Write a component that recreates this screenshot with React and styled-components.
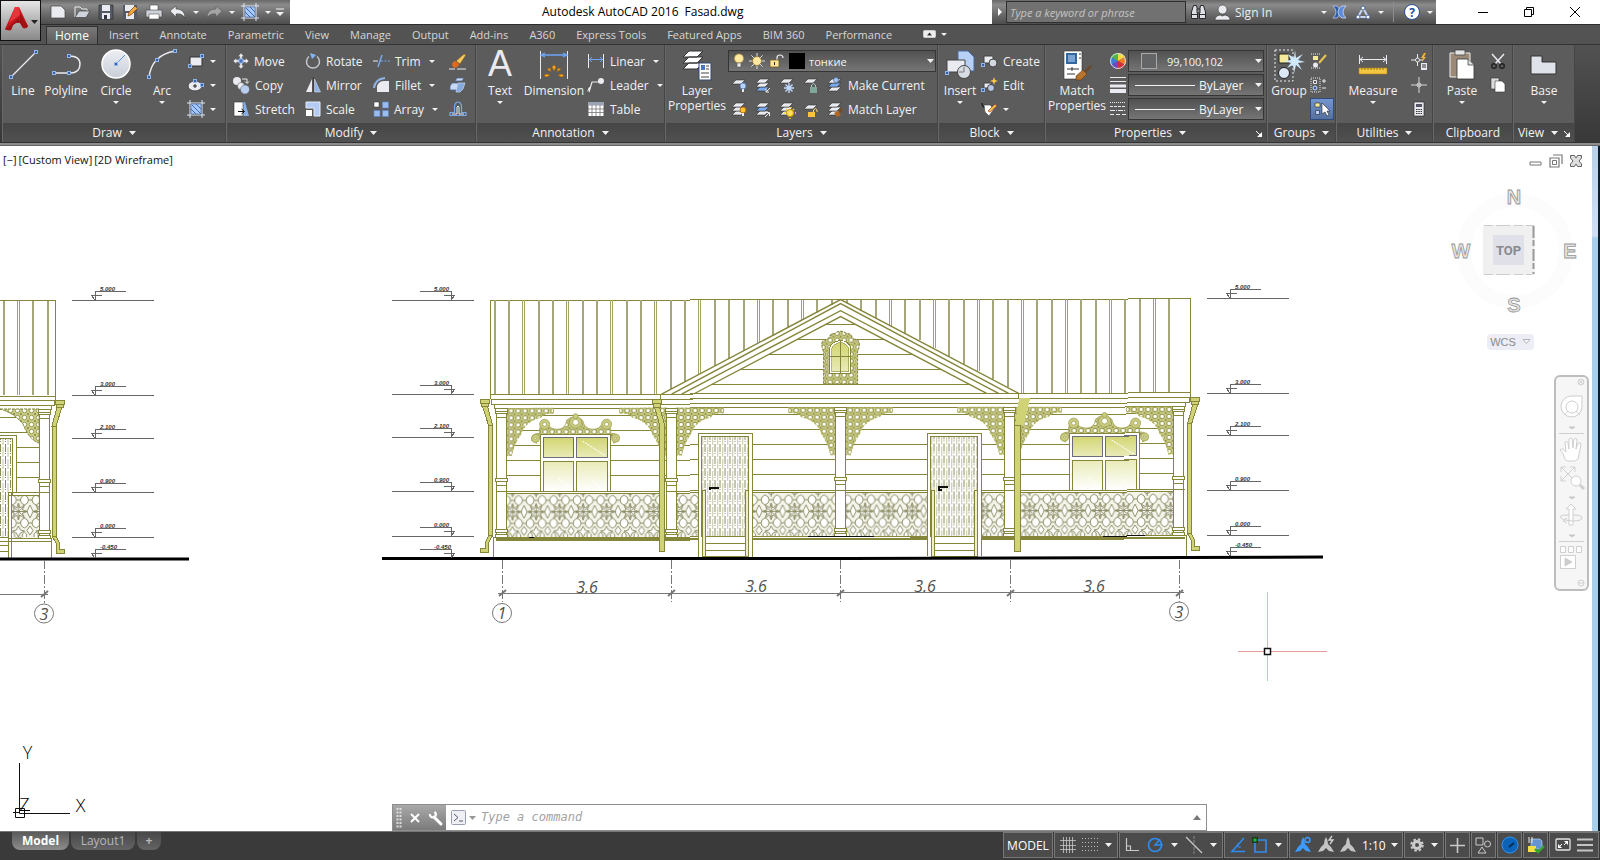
import React from "react";
import styled, { createGlobalStyle, css } from "styled-components";

const ui = `"Open Sans", "Noto Sans", sans-serif`;

const Global = createGlobalStyle`
  * { box-sizing: border-box; }
  body { margin: 0; font-family: ${ui}; font-size: 12px; background: #fff; }
  button, input, select { font: inherit; color: inherit; }
  button { background: none; border: 0; padding: 0; cursor: default; }
  svg { display: block; flex: none; }
`;

/* ---------- shell ---------- */

const Shell = styled.div`
  min-height: 100vh;
  display: flex;
  flex-direction: column;
  overflow: hidden;
`;

const metal = css`
  background: linear-gradient(#686868, #8b8b8b 20%, #6a6a6a 60%, #4d4d4d);
`;

const Header = styled.header`
  position: relative;
  background: #535353;
`;

const TitleBar = styled.div`
  display: flex;
  align-items: stretch;
  justify-content: space-between;
  height: 24px;
  background: #fff;
`;

const AppButton = styled.button`
  position: absolute;
  left: 0;
  top: 0;
  width: 41px;
  height: 41px;
  z-index: 2;
  border: 1px solid #111;
  background: linear-gradient(#e6e6e6, #b4b4b4 50%, #8a8a8a);
`;

const QuickAccess = styled.div`
  ${metal}
  display: flex;
  align-items: center;
  padding-left: 46px;
  width: 290px;
`;

const QuickButton = styled.button`
  display: flex;
  align-items: center;
  justify-content: center;
  width: ${(p) => (p.$narrow ? 12 : 24)}px;
  height: 24px;
`;

const Caption = styled.h1`
  flex: 1;
  display: flex;
  gap: 6px;
  margin: 0;
  padding-left: 252px;
  font-size: 12px;
  font-weight: 400;
  line-height: 24px;
  color: #000;
`;

const InfoCenter = styled.div`
  ${metal}
  display: flex;
  align-items: center;
  width: 444px;
  padding-left: 2px;
  color: #eee;
  font-size: 12px;
`;

const Search = styled.input`
  width: 180px;
  height: 22px;
  padding: 0 3px;
  border: 1px solid #2f2f2f;
  background: #717171;
  font-size: 11px;
  font-style: italic;
  &::placeholder { color: #c4c4c4; opacity: 1; }
`;

const SignIn = styled.button`
  display: flex;
  align-items: center;
  gap: 4px;
  flex: 1;
  padding-left: 4px;
  font-size: 12px;
  span { flex: 1; text-align: left; }
`;

const WindowButtons = styled.div`
  display: flex;
  width: 164px;
  justify-content: flex-end;
  padding-right: 2px;
  button { width: 46px; display: flex; align-items: center; justify-content: center; }
`;

const Divider = styled.span`
  width: 1px;
  height: 20px;
  margin: 0 6px;
  background: #8d8d8d;
`;

/* ---------- ribbon ---------- */

const TabStrip = styled.nav`
  display: flex;
  align-items: flex-end;
  gap: 1px;
  height: 21px;
  padding-left: 46px;
  border-top: 1px solid #2d2d2d;
  border-bottom: 1px solid #333;
`;

const Tab = styled.button`
  height: ${(p) => (p.$active ? 18 : 19)}px;
  padding: 0 10px;
  font-size: ${(p) => (p.$active ? 12 : 11)}px;
  line-height: 16px;
  white-space: nowrap;
  color: ${(p) => (p.$active ? "#fff" : "#d6d6d6")};
  ${(p) =>
    p.$active &&
    css`
      padding: 0 8px;
      background: linear-gradient(#787878, #5c5c5c);
      border: 1px solid #2f2f2f;
      border-bottom: 0;
    `}
`;

const TabToggle = styled.button`
  display: flex;
  align-items: center;
  gap: 5px;
  height: 20px;
  margin-left: 20px;
`;

const Ribbon = styled.div`
  display: flex;
  height: 98px;
  padding-left: 2px;
  border-bottom: 1px solid #333;
  background: linear-gradient(#525252, #383838);
`;

const RibbonEdge = styled.div`
  height: 3px;
  background: #8c8c8c;
  border-bottom: 1px solid #666;
`;

const PanelBox = styled.section`
  display: flex;
  flex-direction: column;
  width: ${(p) => p.$w}px;
  background: #5c5c5c;
  border-right: 1px solid #454545;
  border-left: 1px solid #686868;
  color: #f2f2f2;
`;

const PanelBody = styled.div`
  display: flex;
  height: 78px;
  padding-top: 4px;
`;

const PanelTitle = styled.button`
  position: relative;
  display: flex;
  align-items: center;
  justify-content: center;
  gap: 7px;
  flex: 1;
  background: linear-gradient(#464646, #505050);
  font-size: 12px;
  color: #f2f2f2;
  padding-right: ${(p) => (p.$launch ? 12 : 0)}px;
`;

const Launcher = styled.span`
  position: absolute;
  right: 3px;
  bottom: 4px;
`;

const BigButton = styled.button`
  display: flex;
  flex-direction: column;
  align-items: center;
  width: ${(p) => p.$w}px;
  height: 74px;
  line-height: 15px;
  white-space: pre-line;
  svg + span { margin-top: 2px; }
  span + svg { margin-top: 3px; }
`;

const Stack = styled.div`
  display: grid;
  grid-template-rows: repeat(3, 24px);
  align-items: center;
  width: ${(p) => p.$w}px;
`;

const SmallButton = styled.button`
  display: flex;
  align-items: center;
  gap: 5px;
  height: ${(p) => (p.$on ? 22 : 24)}px;
  white-space: nowrap;
  span + svg { margin-left: 3px; }
  ${(p) =>
    p.$on &&
    css`
      width: 24px;
      justify-content: center;
      background: linear-gradient(#7495cf, #56719f);
      border: 1px solid #2f4a7c;
    `}
`;

const Row = styled.div`
  display: flex;
  align-items: center;
  gap: 7px;
  padding-left: 2px;
`;

const Combo = styled.label`
  display: flex;
  align-items: center;
  gap: 4px;
  width: ${(p) => p.$w}px;
  height: 22px;
  padding: 0 1px 0 4px;
  border: 1px solid #353535;
  background: linear-gradient(#515151, #757575);
`;

const Select = styled.select`
  appearance: none;
  flex: 1;
  min-width: 0;
  padding: 0;
  border: 0;
  background: none;
  color: #f4f4f4;
  font-size: ${(p) => (p.$large ? 12 : 11)}px;
`;

const Swatch = styled.span`
  width: 16px;
  height: 16px;
  margin: ${(p) => (p.$plain ? "0" : "0 6px 0 8px")};
  background: ${(p) => p.$c};
  border: 1px solid ${(p) => (p.$plain ? p.$c : "#a9a9a9")};
`;

const LineSample = styled.span`
  width: 60px;
  height: 1px;
  margin-left: 2px;
  background: #f4f4f4;
`;

/* ---------- canvas ---------- */

const Canvas = styled.main`
  position: relative;
  flex: 1;
  display: flex;
  min-height: 0;
  background: #fff;
  border-right: 2px solid #0b1c2b;
  &::after {
    content: "";
    width: 6px;
    background: linear-gradient(#b9d0e8 0, #cfe0f4 90px, #a9d0ea 92px);
  }
`;

const Drawing = styled.svg`
  flex: 1;
  min-width: 0;
  height: 685px;
  font-family: ${ui};
`;

const ViewControls = styled.div`
  position: absolute;
  left: 3px;
  top: 6px;
  display: flex;
  gap: 2px;
  font-size: 11px;
  line-height: 16px;
  color: #111;
`;

const DocButtons = styled.div`
  position: absolute;
  right: 15px;
  top: 8px;
  display: flex;
  gap: 6px;
`;

const Compass = styled.svg`
  position: absolute;
  right: 10px;
  top: 38px;
  font-family: "Liberation Sans", sans-serif;
`;

const WcsButton = styled.button`
  position: absolute;
  right: 64px;
  top: 188px;
  display: flex;
  align-items: center;
  justify-content: center;
  gap: 6px;
  width: 47px;
  height: 16px;
  border-radius: 4px;
  background: #ecedf5;
  color: #8a8a8f;
  font: 11px "Liberation Sans", sans-serif;
`;

const NavBar = styled.div`
  position: absolute;
  right: 9px;
  top: 229px;
`;

const CommandLine = styled.form`
  position: absolute;
  left: 392px;
  right: 391px;
  bottom: 0;
  display: flex;
  align-items: center;
  height: 27px;
  border: 1px solid #8e8e8e;
  background: #fff;
`;

const CommandGrip = styled.div`
  display: flex;
  align-items: center;
  gap: 8px;
  width: 53px;
  height: 25px;
  padding-left: 3px;
  background: linear-gradient(#a9a9a9, #7b7b7b);
`;

const CommandInput = styled.input`
  flex: 1;
  height: 24px;
  padding: 0 0 2px;
  border: 0;
  outline: 0;
  font: italic 12px "DejaVu Sans Mono", monospace;
  &::placeholder { color: #a2a2a2; opacity: 1; }
`;

const CommandButton = styled.button`
  display: flex;
  align-items: center;
  gap: 3px;
  padding: 0 5px;
`;

/* ---------- footer ---------- */

const Footer = styled.footer`
  display: flex;
  justify-content: space-between;
  height: 29px;
  border-top: 1px solid #777;
  background: #3a3a3a;
`;

const SheetTabs = styled.div`
  display: flex;
  padding-left: 12px;
  gap: 2px;
`;

const Sheet = styled.button`
  height: 18px;
  width: ${(p) => p.$w}px;
  border-radius: 0 0 8px 8px;
  background: ${(p) => (p.$active ? "linear-gradient(#5a5a5a, #8d8d8d)" : "linear-gradient(#484848, #646464)")};
  color: ${(p) => (p.$active ? "#fff" : "#b8b8b8")};
  font-weight: ${(p) => (p.$active || p.$bold ? 700 : 400)};
  font-size: 12px;
  line-height: 16px;
`;

const StatusTools = styled.div`
  display: flex;
  gap: 1px;
  padding: 0 1px 2px 0;
`;

const StatusGroup = styled.div`
  display: flex;
  align-items: center;
  justify-content: space-around;
  width: ${(p) => p.$w}px;
  height: 26px;
  padding: 0 2px;
  border: 1px solid #777;
  background: #4b4b4b;
  color: #fff;
  button { display: flex; align-items: center; gap: 5px; white-space: nowrap; }
`;

/* ---------- icons ---------- */

const W = "#e9ebf0";
const B = "#7aa9ee";
const node = (x, y) => <rect key={`${x}-${y}`} x={x - 1.5} y={y - 1.5} width="3" height="3" fill="#3d5f9c" stroke="#8db6f5" />;
const sheet = (y, f = W) => <path d={`M2 ${y + 4}l4-4h9l-4 4z`} fill={f} stroke="#333" strokeWidth=".6" />;
const layers = (hi) => (
  <>
    {sheet(10, hi === 2 ? B : W)}
    {sheet(6, hi === 1 ? B : W)}
    {sheet(2)}
  </>
);
const person = (c) => <path d="M9 1q2 3 2 7l3 3 3 5-5-1-3-3-3 3-5 1 3-5 3-3q0-4 2-7z" fill={c} />;

const ICONS = {
  logo: [38, 38, <>
    <path d="M14 5h4l9 19q-1 3-5 2l-3-5q-4-1-7 2l-2 5q-3 1-6-1z" fill="#c4161c" />
    <path d="M14 5h4l1 8-11 8z" fill="#e8353a" />
    <path d="M19 12l8 12q-1 3-5 2l-3-5z" fill="#a01216" />
    <path d="M4 27l6-4 8-7 1 5q-4-1-7 2l-2 5q-3 1-6-1z" fill="#9c1115" />
    <path d="M30 18h7l-3.500 4z" fill="#222" />
  </>],
  newf: [18, 16, <path d="M2 2h10l4 4v8H2z" fill={W} stroke="#444" strokeWidth=".7" />],
  open: [18, 16, <><path d="M2 13V3h5l2 2h5v3" fill="none" stroke={W} /><path d="M2 13.500L6 7h11l-4 6.500z" fill="#cfd4dc" stroke="#333" strokeWidth=".6" /></>],
  save: [16, 16, <><path d="M1 1h14v14H1z" fill="#555b66" stroke="#222" strokeWidth=".6" /><path d="M4 1h8v6H4zM4 9h8v6H4z" fill={W} /><path d="M6 11h3v4H6z" fill="#334" /></>],
  saveas: [16, 16, <><path d="M1 1h14v14H1z" fill="#555b66" /><path d="M3 1h9v6H3zM4 9h8v6H4z" fill={W} /><path d="M6 12l1-4 6-6 2.500 2.500-6 6z" fill="#efa83c" stroke="#7b3b10" strokeWidth=".7" /></>],
  print: [18, 16, <><path d="M5 1h8v6H5z" fill="#fff" stroke="#444" strokeWidth=".6" /><path d="M1 6h16v7H1z" fill="#cdd1d8" stroke="#444" strokeWidth=".6" /><path d="M4 10h10v5H4z" fill="#fff" stroke="#555" strokeWidth=".6" /></>],
  undo: [18, 16, <path d="M1 7l6-5v3q9 0 9 9-3-5-9-4v3z" fill={W} stroke="#333" strokeWidth=".5" />],
  redo: [18, 16, <path d="M17 7l-6-5v3q-9 0-9 9 3-5 9-4v3z" fill="#a4a4a4" stroke="#555" strokeWidth=".5" />],
  hatch: [18, 18, <><path d="M3 0v18M15 0v18M0 3h18M0 15h18" stroke="#dfe8f6" /><path d="M4 4h10v10H4z" fill="#a8c8fa" stroke="#39598f" strokeWidth=".5" /><path d="M5 5l9 9M9 4l5 5M4 9l5 5" stroke="#3b68b5" /></>],
  caret: [7, 4, <path d="M0 0h7l-3.500 4z" fill="#f2f2f2" />],
  smallCaret: [6, 3, <path d="M0 0h6l-3 3z" fill="#f2f2f2" />],
  dark: [7, 4, <path d="M0 0h7l-3.500 4z" fill="#999" />],
  hollow: [9, 6, <path d="M1 .5h7L4.500 4.500z" fill="#f6f6fa" stroke="#b5b5bd" />],
  qatEnd: [10, 8, <><path d="M1 1h8" stroke="#f2f2f2" /><path d="M1 4h8L5 8z" fill="#f2f2f2" /></>],
  right: [6, 8, <path d="M1 0v8l4-4z" fill="#fff" />],
  binoc: [17, 16, <><path d="M1.500 14.500V8l2-6.500h3l1 5v8zM15.500 14.500V8l-2-6.500h-3l-1 5v8z" fill="#dfe1e6" stroke="#26282c" /><path d="M7 5h3v4H7zM1.500 10.500h6M9.500 10.500h6" fill="#888" stroke="#333" /></>],
  user: [17, 17, <><circle cx="8.500" cy="5.500" r="4.500" fill="#e8eaef" stroke="#333" strokeWidth=".6" /><path d="M1 16q0-4 5-5l2.500 1L11 11q5 1 5 5z" fill={W} stroke="#333" strokeWidth=".6" /></>],
  exch: [15, 14, <><path d="M1 1h4l5 6-5 6H1q3-3 3-6T1 1z" fill="#2f5aa6" stroke="#c4d6f7" strokeWidth=".7" /><path d="M14 1h-4Q6 3 6 7t4 6h4q-3-3-3-6t3-6z" fill="#5e8bd4" stroke="#dbe7ff" strokeWidth=".7" /></>],
  a360: [16, 15, <><path d="M8 3l5 9H3z" fill="none" stroke="#c9d6ef" strokeWidth="2" /><circle cx="8" cy="3" r="2" fill="#fff" stroke="#48619c" /><circle cx="3" cy="12" r="2" fill="#fff" stroke="#48619c" /><circle cx="13" cy="12" r="2" fill="#fff" stroke="#48619c" /></>],
  help: [18, 18, <><circle cx="9" cy="9" r="7.500" fill="#fff" stroke="#2a4c8e" /><text x="9" y="13.500" fontSize="12" fontWeight="700" textAnchor="middle" fill="#23509d">?</text></>],
  min: [12, 12, <path d="M1 6.500h10" stroke="#000" />],
  max: [12, 12, <path d="M1.500 3.500h7v7h-7zM3.500 3.500v-2h7v7h-2" fill="none" stroke="#000" />],
  close: [12, 12, <path d="M1 1l10 10M11 1L1 11" stroke="#000" />],
  ribbonMin: [13, 8, <><rect x=".5" y=".5" width="12" height="7" rx="1" fill="#eee" stroke="#ccc" /><path d="M4 5.500h5L6.500 2.500z" fill="#333" /></>],
  launch: [8, 8, <><path d="M1 1l4 4" stroke="#fff" /><path d="M2 7h5V2z" fill="#fff" /></>],

  line: [32, 32, <><path d="M4 28L29 3" stroke={W} strokeWidth="1.300" />{node(4, 28)}{node(29, 3)}</>],
  polyline: [34, 32, <><path d="M5 24h16q10 0 10-9 0-8-11-8" fill="none" stroke={W} strokeWidth="1.500" />{node(5, 24)}{node(20, 24)}{node(20, 7)}</>],
  circle: [32, 32, <><defs><linearGradient id="ball" x2="0" y2="1"><stop offset="0" stopColor="#eceef2" /><stop offset="1" stopColor="#c9ced8" /></linearGradient></defs><circle cx="16" cy="15" r="14" fill="url(#ball)" stroke="#fff" strokeWidth="1.500" /><path d="M16 15l9-9" stroke="#5b93e8" />{node(16, 15)}</>],
  arc: [32, 32, <><path d="M3 28Q6 6 29 2" fill="none" stroke={W} strokeWidth="1.400" />{node(3, 28)}{node(11, 11)}{node(29, 2)}</>],
  rect: [18, 16, <><path d="M3 4h12v9H3z" fill={W} stroke="#333" />{node(3, 13)}{node(15, 3)}</>],
  ellipse: [18, 16, <><ellipse cx="8" cy="9" rx="7" ry="5" fill={W} stroke="#444" /><path d="M8 7v4M6 9h4" stroke="#222" />{node(8, 4)}{node(15, 8)}</>],

  move: [16, 16, <><path d="M8 0l3 3.500H9.200v9H11L8 16l-3-3.500h1.800v-9H5zM0 8l3.500-3v1.800h9V5L16 8l-3.500 3V9.200h-9V11z" fill={W} stroke="#444" strokeWidth=".4" /><path d="M6 6h4v4H6z" fill="#4770ad" stroke="#8db6f5" /></>],
  copy: [17, 17, <><circle cx="4" cy="4" r="4" fill={W} /><circle cx="8" cy="9" r="3.500" fill={W} stroke="#555" strokeWidth=".5" /><circle cx="12" cy="12.500" r="4.500" fill="#b9cdf0" stroke="#555" strokeWidth=".5" /><path d="M9 2h5v4M12 4.500l2 2 2-2" fill="none" stroke={W} /></>],
  stretch: [17, 16, <><path d="M9 1h3l4 14H9z" fill="#86aee8" /><path d="M1 1h9v14H1z" fill="#fff" stroke="#333" strokeWidth=".6" /><path d="M5 10.500h6M8.500 8l3 2.500-3 2.500" fill="none" stroke="#111" /></>],
  rotate: [16, 16, <><path d="M4 3.500A6.500 6.500 0 1012 3.500" fill="none" stroke="#c4c8cf" strokeWidth="1.500" /><path d="M5 0l6 2-4 4z" fill="#86b6f7" /></>],
  mirror: [16, 16, <><path d="M7 2v13H1z" fill={W} /><path d="M9.500 2v13h6z" fill="#8fb3e6" stroke={W} strokeWidth=".5" /><path d="M8.300 0v16" stroke="#222" strokeWidth=".6" /></>],
  scale: [16, 16, <><path d="M1 1h14v14H9V7H1z" fill="#b4ccf3" stroke="#e5ecfa" /><path d="M1 9h6v6H1z" fill="#fff" /></>],
  trim: [17, 16, <><path d="M0 8h5" stroke={W} /><path d="M8 8h9" stroke={B} strokeDasharray="2 1.500" /><path d="M9 2L5 14" stroke={B} strokeWidth="1.500" /></>],
  fillet: [17, 16, <><path d="M4 15V9q2-5 7-5h5v11z" fill={W} /><path d="M1 11Q2 2 12 1" fill="none" stroke="#8fb3e6" strokeWidth="2" /></>],
  array: [16, 16, <><path d="M1 1h5v5H1z" fill="#fff" stroke="#333" strokeWidth=".5" /><path d="M9.500 1h6v6h-6zM1 9.500h6v6H1zM9.500 9.500h6v6h-6z" fill="#9bbcf0" stroke="#5f87c6" strokeWidth=".7" /></>],
  erase: [17, 17, <><path d="M0 16h6M8 16h9" stroke={W} /><path d="M15 1l2 1-6 9-4-3z" fill="#f5c95e" stroke="#7a4a12" strokeWidth=".6" /><path d="M3 12q0-3 3-4l4 3q0 3-5 4z" fill="#e2691c" /></>],
  explode: [17, 16, <><path d="M6 4l2-3h7l-2 3zM1 9l2-3h6v7H1z" fill="#c6d6f3" stroke="#44608f" strokeWidth=".7" /><path d="M9 6h7l-2 6-3 3H7z" fill="#86a9de" stroke="#c6d6f3" strokeWidth=".7" /></>],
  offset: [18, 16, <><path d="M1 14.500h16v-3h-4.500V5q-1-4-3.500-4T5.500 5v6.500H1z" fill="none" stroke={B} strokeWidth="1.200" /><path d="M3 13h5V6q1-2 2 0v7h5" fill="none" stroke={W} /></>],

  text: [30, 32, <text x="15" y="27" fontSize="36" textAnchor="middle" fill={W} fontFamily="Liberation Sans, sans-serif">A</text>],
  dim: [32, 32, <><path d="M2.500 2v28M29.500 2v28" stroke={W} /><path d="M4 6h24M7 4L3 6l4 2M25 4l4 2-4 2" fill="none" stroke="#6ba4f5" strokeWidth="1.300" /><path d="M14 18l2-2 2 2-2 4zM9 20l3-1 1 4zM23 20l-3-1-1 4zM6 27l2-2 4 1-3 2zM26 27l-2-2-4 1 3 2z" fill="#f5a623" stroke="#a05c00" strokeWidth=".5" /></>],
  linear: [18, 16, <><path d="M1.500 1v14M16.500 1v14" stroke={W} /><path d="M2 6.500h14M5 4L2.500 6.500 5 9M13 4l2.500 2.500L13 9" fill="none" stroke="#6ba4f5" /></>],
  leader: [18, 16, <><path d="M2 15L5 5h8" fill="none" stroke={W} strokeWidth="1.200" /><circle cx="14" cy="4" r="3" fill={W} /><path d="M0 15l2-5 1.500 1z" fill="#fff" /></>],
  table: [18, 16, <><path d="M1.500 1h15v14h-15z" fill="#fff" /><path d="M1.500 1h15v3.500h-15z" fill="#9aa3b3" /><path d="M1 8h16M1 11.500h16M5 4v11M9 4v11M13 4v11" stroke="#777" strokeWidth=".8" /></>],

  layerProps: [32, 32, <><path d="M2 20l6-6h14l-6 6z M2 14l6-6h14l-6 6z M2 8l6-6h14l-6 6z" fill="#fff" stroke="#333" /><path d="M18 14h12v17H18z" fill="#fff" stroke="#334a77" /><path d="M20 16h4v5h-4z" fill="#4a78bd" /><path d="M25 17h3M25 20h3M20 24h8M20 28h8" stroke="#444" /></>],
  bulb: [12, 16, <><circle cx="6" cy="5.500" r="4.500" fill="#ffe9a0" stroke="#b8913a" strokeWidth=".6" /><path d="M4 10h4v4H4z" fill="#e7e7e7" stroke="#555" strokeWidth=".6" /></>],
  sun: [16, 16, <><path d="M8 0v16M0 8h16M2.300 2.300l11.400 11.400M13.700 2.300L2.300 13.700" stroke="#ddd" strokeWidth="1" /><circle cx="8" cy="8" r="4.500" fill="#ffe9a0" stroke="#7d6523" strokeWidth=".7" /></>],
  unlock: [16, 16, <><path d="M8 7V5q0-3 3-3t3 3" fill="none" stroke={W} strokeWidth="1.200" /><path d="M1 7h9v7H1z" fill="#ffe79a" stroke="#6e5a1d" strokeWidth=".8" /><path d="M5.500 9v3" stroke="#222" /></>],
  lOff: [17, 17, <>{sheet(3)}<circle cx="13" cy="9" r="3" fill="#b9d3fb" stroke="#5c83be" /><path d="M13 12v3" stroke={W} strokeWidth="2" /></>],
  lIso: [17, 17, <>{layers(2)}<path d="M16 11l-4 4M12 12v3h3" fill="none" stroke={W} /></>],
  lFrz: [17, 17, <>{sheet(2)}<path d="M11 6v10M6 11h10M7.500 7.500l7 7M14.500 7.500l-7 7" stroke="#c2d9ff" strokeWidth="1.400" /></>],
  lLock: [17, 17, <>{sheet(2)}<path d="M8 10h7v6H8z" fill="#7fa89b" /><path d="M9.500 10V8q2-3 4 0v2" fill="none" stroke="#a7c9be" /></>],
  lCur: [17, 17, <>{layers(1)}<circle cx="10" cy="3" r="2.500" fill="#a9c6f5" stroke="#48699e" strokeWidth=".7" /></>],
  lOn: [17, 17, <>{layers(0)}<circle cx="13" cy="9" r="3" fill="#ffc23a" stroke="#b96a00" /><path d="M13 12v3" stroke={W} strokeWidth="2" /></>],
  lUniso: [17, 17, <>{layers(1)}<path d="M11 16l4-4M12 11.500h3.500V15" fill="none" stroke={W} /></>],
  lThaw: [17, 17, <>{layers(0)}<circle cx="12" cy="12" r="3.500" fill="#ffe15a" stroke="#d69200" /><path d="M12 7v-1M12 17v1M7 12H6M17 12h1M8 8l1 1M16 8l-1 1" stroke="#ffd23a" strokeWidth="1.500" /></>],
  lUnlock: [17, 17, <>{sheet(4)}<path d="M6 11h7v5H6z" fill="#ffc23a" /><path d="M11.500 11V9q2-3 3.500 0v2" fill="none" stroke="#ffd77a" /></>],
  lMatch: [17, 17, <>{layers(0)}<path d="M8 12l4-2 3 4-4 2z" fill="#b6651d" /><path d="M13 11l3-3" stroke="#7c4a1b" strokeWidth="2" /></>],

  insert: [32, 32, <><path d="M14 2h10l6 6v14H14z" fill="#b9d0f6" stroke="#4a6aa1" /><path d="M3 11h18v12H3z" fill={W} stroke="#444" /><circle cx="20" cy="23" r="6.500" fill="#d8dce4" stroke="#444" /><path d="M20 18v5h-5" fill="none" stroke="#777" />{node(3, 24)}</>],
  create: [17, 16, <><path d="M3 3h9v7H3z" fill={W} stroke="#444" /><circle cx="12" cy="10" r="4" fill="#d3d7df" stroke="#444" />{node(2, 12)}</>],
  editB: [17, 16, <><path d="M3 6h7v5H3z" fill={W} stroke="#444" /><circle cx="10" cy="11" r="3.500" fill="#b7c8e6" stroke="#444" /><path d="M13 0l1 3 3 1-3 1-1 3-1-3-3-1 3-1z" fill="#ffc94a" />{node(2, 13)}</>],
  attrs: [17, 16, <><path d="M1 2q0 4 4 5" fill="none" stroke="#222" strokeWidth="1.500" /><path d="M3 4h6l4 4-5 7-4-4z" fill="#fff" stroke="#444" strokeWidth=".6" /><path d="M7 10l7-7 2 2-7 6z" fill="#f0c24a" stroke="#a3231d" strokeWidth=".6" /></>],
  matchP: [32, 32, <><path d="M3 2h18v28H3z" fill="#fff" stroke="#333" strokeWidth=".6" /><path d="M5 4h11v11H5z" fill="#32669f" /><path d="M7 6h7v7H7z" fill="#7ba4d5" /><path d="M18 5h2M18 9h2M6 20h12M6 25h8M11 18v4" stroke="#333" /><path d="M15 27l7-6 4 4-6 6h-5z" fill="#b6742f" stroke="#5a3210" strokeWidth=".6" /><path d="M24 23l6-6" stroke="#6a4a2b" strokeWidth="2.500" /></>],
  wheel: [16, 16, <><path d="M8 8V0A8 8 0 0115 4z" fill="#f5d93f" /><path d="M8 8l7-4a8 8 0 010 8z" fill="#ef7d2b" /><path d="M8 8l7 4a8 8 0 01-7 4z" fill="#d22f38" /><path d="M8 8v8a8 8 0 01-7-4z" fill="#7845b5" /><path d="M8 8l-7 4a8 8 0 010-8z" fill="#3c7fd8" /><path d="M8 8L1 4a8 8 0 017-4z" fill="#4db848" /><circle cx="8" cy="8" r="7.500" fill="none" stroke="#ddd" /></>],
  weights: [16, 16, <><path d="M0 .5h16M0 4.500h16" stroke={W} /><path d="M0 9h16" stroke={W} strokeWidth="3" /><path d="M0 14h16" stroke={W} strokeWidth="4" /></>],
  types: [16, 16, <><path d="M0 1.500h16" stroke={W} strokeDasharray="1 1" /><path d="M0 5.500h16" stroke={W} strokeDasharray="3 1" /><path d="M0 9.500h16" stroke={W} strokeDasharray="5 1 1 1" /><path d="M0 13.500h16" stroke={W} strokeDasharray="4 2" /></>],

  group: [34, 32, <><path d="M3 1h18v31H3z" fill="none" stroke={W} strokeDasharray="2 2" /><path d="M7 5h10v9H7z" fill="#f4ec9a" stroke="#222" /><circle cx="12" cy="24" r="5.500" fill="#dbe8f6" stroke="#222" /><path d="M23 1l1 8 7-4-5 6 7 2-7 1 4 7-6-5-2 8-1-8-6 3 4-5-7-2 7-1-3-6 6 4z" fill="#cfeaff" /></>],
  grpEdit: [17, 16, <><path d="M1 1h9M1 15h9" stroke={W} strokeDasharray="1 1" /><path d="M3 3h5v4H3z" fill="#f4ec9a" /><circle cx="5.500" cy="12" r="2.500" fill={W} /><path d="M9 10l7-8" stroke="#e4c64f" strokeWidth="2" /></>],
  grpAdd: [17, 16, <><path d="M1 1h9v14H1z" fill="none" stroke={W} strokeDasharray="1 1" /><path d="M3.500 3.500h3v3h-3z" fill="#555" stroke={W} /><circle cx="5" cy="11" r="2" fill="#3b5f9d" stroke="#cfe0ff" /><path d="M12 4h4M14 2v4M12 11h4" stroke={W} /></>],
  grpSel: [17, 16, <><path d="M1 2h5v4H1z" fill="#f4ec9a" stroke="#222" strokeWidth=".6" /><path d="M1.500 9.500h4v4h-4z" fill="#b9d3fb" stroke="#222" strokeWidth=".6" /><path d="M8 2v11l3-2 2 4 2-1-2-4h3z" fill="#fff" stroke="#222" strokeWidth=".6" /></>],
  measure: [32, 32, <><path d="M2.500 6v9M29.500 6v9M3 10.500h26M6 8l-3 2.500L6 13M26 8l3 2.500L26 13" fill="none" stroke={W} /><path d="M2 19h28v6H2z" fill="#f2c641" stroke="#b18413" strokeWidth=".6" /><path d="M5 19v2M8 19v2M11 19v2M14 19v2M17 19v2M20 19v2M23 19v2M26 19v2" stroke="#7b5a0a" strokeWidth=".7" /></>],
  quick: [17, 17, <><path d="M0 7h12M6.500 1v12" stroke={W} /><circle cx="6.500" cy="7" r="2" fill="#5c5c5c" stroke={W} /><path d="M13 0l-3 5h2l-1 4 4-5h-2l2-4z" fill="#f5b32b" /><path d="M10 10h6v7h-6z" fill={W} /><path d="M11 12h4M11 14h4" stroke="#333" /></>],
  point: [16, 16, <><path d="M0 8h16M8 0v16" stroke="#d6d6d6" /><circle cx="8" cy="8" r="2" fill="none" stroke="#d6d6d6" /></>],
  calc: [16, 16, <><path d="M3 1h10v14H3z" fill={W} stroke="#222" strokeWidth=".6" /><path d="M5 3h6v3H5z" fill="#556" /><path d="M5 8.500h6M5 10.500h6M5 12.500h6" stroke="#333" strokeDasharray="1.500 .8" /></>],
  paste: [32, 32, <><path d="M4 4h20v24H4z" fill="#9b8a77" stroke="#eee" /><path d="M9 1h10v5H9z" fill="#e4e4e4" stroke="#333" strokeWidth=".7" /><path d="M11 10h11l6 6v14H11z" fill="#fff" stroke="#333" strokeWidth=".8" /><path d="M22 10v6h6" fill="#ddd" stroke="#333" strokeWidth=".7" /></>],
  cut: [16, 16, <><path d="M2 1l9 10M14 1L5 11" stroke={W} strokeWidth="1.500" /><circle cx="4" cy="13" r="2.300" fill="none" stroke="#222" strokeWidth="1.400" /><circle cx="12" cy="13" r="2.300" fill="none" stroke="#222" strokeWidth="1.400" /></>],
  copyClip: [16, 16, <><path d="M1 1h8v11H1z" fill="#ddd" stroke="#333" strokeWidth=".6" /><path d="M5 4h7l3 3v8H5z" fill="#fff" stroke="#333" strokeWidth=".6" /></>],
  base: [28, 32, <path d="M1 7h11v6h14v12H1z" fill="#dfe2e8" stroke="#333" />],

  sMin: [14, 14, <path d="M1 8h11v3H1z" fill="#fff" stroke="#777" />],
  sMax: [14, 14, <><path d="M4 1h9v9M1 4h9v9H1z" fill="none" stroke="#777" strokeWidth="1.200" /><path d="M3.500 6.500h4v4h-4z" fill="#fff" stroke="#777" /></>],
  sClose: [14, 14, <path d="M1.500 1.500h4L7 4l1.500-2.500h4V4L10 7l2.500 3v2.500h-4L7 10l-1.500 2.500h-4V10L4 7 1.500 4z" fill="#ddd" stroke="#666" />],
  grip: [6, 20, <path d="M1.500 0v20M4.500 0v20" stroke="#ddd" strokeWidth="2" strokeDasharray="2 1.500" />],
  cx: [10, 10, <path d="M1 1l8 8M9 1L1 9" stroke="#fff" strokeWidth="2" />],
  wrench: [15, 16, <><path d="M6 7l7 7" stroke="#fff" strokeWidth="3" strokeLinecap="round" /><path d="M2 4a3 3 0 003 3.500A3 3 0 006.500 2" stroke="#fff" strokeWidth="2.200" /></>],
  prompt: [15, 15, <><rect x=".5" y=".5" width="14" height="14" rx="1" fill="#eef0f5" stroke="#9a9fb0" /><path d="M3 4l4 3.500L3 11M8 11h4" fill="none" stroke="#555a70" /></>],
  up: [8, 5, <path d="M0 5h8L4 0z" fill="#777" />],

  grid: [16, 16, <path d="M3.500 0v16M6.500 0v16M9.500 0v16M12.500 0v16M0 3.500h16M0 8.500h16M0 12.500h16" stroke="#c9c9c9" strokeWidth=".8" />],
  dots: [16, 16, <path d="M0 1.500h16M0 5.500h16M0 9.500h16M0 13.500h16" stroke="#bbb" strokeDasharray="1 2" />],
  ortho: [15, 16, <path d="M1.500 1v12.500H14M1.500 9h4v4" fill="none" stroke="#c9c9c9" strokeWidth="1.200" />],
  polar: [18, 16, <><circle cx="8" cy="8" r="6.500" fill="none" stroke="#2f8cf0" strokeWidth="1.600" /><path d="M16 8H8l5-6" fill="none" stroke="#2f8cf0" strokeWidth="1.400" /></>],
  iso: [18, 18, <><path d="M1 1l16 16" stroke="#c9c9c9" strokeWidth="1.300" /><path d="M9 0v8M9 11v7" stroke="#888" strokeDasharray="3 1" /></>],
  track: [16, 16, <><path d="M14 1L2 14.500h13" fill="none" stroke="#2f8cf0" strokeWidth="1.600" /><path d="M8 6v4h3" stroke="#2f8cf0" fill="none" /></>],
  osnap: [17, 17, <><path d="M3 3h11v12H3z" fill="none" stroke="#2f8cf0" strokeWidth="1.700" /><path d="M0 0h6v6H0z" fill="#173d17" /><path d="M1.500 1.500h3v3h-3z" fill="#25b43a" /></>],
  ann1: [18, 18, <>{person("#3d9bff")}<circle cx="13.500" cy="4" r="2.500" fill="none" stroke="#3d9bff" strokeWidth="1.400" /></>],
  ann2: [18, 18, <>{person("#c4c4c4")}<path d="M15 0l-3 4h4l-3 4" fill="none" stroke="#d4d4d4" strokeWidth="1.300" /></>],
  ann3: [18, 18, person("#c4c4c4")],
  gear: [14, 14, <><circle cx="7" cy="7" r="3.500" fill="none" stroke="#ccc" strokeWidth="3" /><circle cx="7" cy="7" r="5.700" fill="none" stroke="#ccc" strokeWidth="2" strokeDasharray="2.500 2" /></>],
  plus: [15, 15, <path d="M7.500 0v15M0 7.500h15" stroke="#c9c9c9" strokeWidth="1.600" />],
  shapes: [17, 17, <><path d="M1 1h7v7H1z" fill="none" stroke="#ccc" /><circle cx="12.500" cy="7" r="3" fill="none" stroke="#ccc" /><path d="M7 10l4 6H3z" fill="none" stroke="#ccc" /></>],
  perf: [18, 18, <><circle cx="9" cy="9" r="8" fill="#0d63b5" stroke="#2b93f2" /><path d="M8 11l5-4" stroke="#0a2c50" strokeWidth="2" /></>],
  cloud: [18, 18, <><path d="M4 3h9l2 2v8H4z" fill="#6594d3" stroke="#cfe0f7" strokeWidth=".6" /><path d="M1 10h8v6H1z" fill="#f2df45" /><path d="M2 1v6M5 1v6" stroke="#eee" /><path d="M8 13l3 3 6-6" fill="none" stroke="#37a62c" strokeWidth="2.400" /></>],
  full: [16, 14, <><rect x="1" y="1" width="14" height="11" rx="1" fill="none" stroke="#e3e3e3" strokeWidth="1.300" /><path d="M9 3h4v4zM3 6v4h4z" fill="#fff" /><path d="M12 4L9 7M4 9l3-3" stroke="#fff" /></>],
  menu: [16, 14, <path d="M0 1.500h16M0 7h16M0 12.500h16" stroke="#c4c4c4" strokeWidth="2.200" />],
};

const Icon = ({ name }) => {
  const [w, h, art] = ICONS[name];
  return (
    <svg width={w} height={h} viewBox={`0 0 ${w} ${h}`} fill="none" overflow="visible" aria-hidden="true">
      {art}
    </svg>
  );
};

const Big = ({ icon, label, w, menu }) => (
  <BigButton $w={w}>
    <Icon name={icon} />
    <span>{label}</span>
    {menu && <Icon name="smallCaret" />}
  </BigButton>
);

const Small = ({ icon, label, menu, on }) => (
  <SmallButton $on={on} aria-label={label || icon}>
    <Icon name={icon} />
    {label && <span>{label}</span>}
    {menu && <Icon name="smallCaret" />}
  </SmallButton>
);

const Panel = ({ title, w, launch, plain, children }) => (
  <PanelBox $w={w}>
    <PanelBody>{children}</PanelBody>
    <PanelTitle $launch={launch}>
      {title}
      {!plain && <Icon name="caret" />}
      {launch && <Launcher><Icon name="launch" /></Launcher>}
    </PanelTitle>
  </PanelBox>
);

const Pick = ({ w, label, value, before, large }) => (
  <Combo $w={w}>
    {before}
    <Select aria-label={label} defaultValue={value} $large={large}>
      <option>{value}</option>
    </Select>
    <Icon name="caret" />
  </Combo>
);

const TABS = ["Insert", "Annotate", "Parametric", "View", "Manage", "Output", "Add-ins", "A360", "Express Tools", "Featured Apps", "BIM 360", "Performance"];

/* ---------- facade drawing ---------- */

const INK = "#85863a";
const PIPE = "#d0d276";

const Seams = ({ xs, doubles, bottom }) =>
  xs.map((x, i) =>
    doubles.includes(i) ? (
      <path key={i} d={`M${x - 1} 300V${bottom(x)}M${x + 1} 300V${bottom(x)}`} stroke="#a3a46a" strokeWidth="1" />
    ) : (
      <path key={i} d={`M${x} 300V${bottom(x)}`} stroke="#a5a67c" strokeWidth="2" />
    )
  );

const Column = ({ x }) => (
  <g transform={`translate(${x} 0)`}>
    <path d="M0 408h10v129H0z" fill="#fff" />
    <path d="M-1 408h12v3h-12zM-1 411h12v2h-12zM0 413h10v4H0zM-1 478h12v3h-12zM0 481v4h10v-4M-1 491h12M-1 529h12v3h-12zM-1 534h12v3h-12z" fill="#fff" />
  </g>
);

const Spout = ({ x, flip }) => (
  <g transform={`translate(${x} 0) scale(${flip ? -1 : 1} 1)`} fill={PIPE}>
    <path d="M0 399h9v4H0zM1 403h7v3H1zM2 406h5l5 19H8zM8 425h4v110H8zM8 535h4l-4 7v10H0v-4h5v-7z" />
  </g>
);

const BRACKET = "M0 408H47V413Q38 412 34 417Q18 421 14 434Q7 444 5 455H0Z";
const Bracket = ({ x, flip }) => (
  <path transform={`translate(${x} 0) scale(${flip ? -1 : 1} 1)`} d={BRACKET} fill="url(#lace)" stroke="#b0b25c" shapeRendering="auto" strokeDasharray="3 1" />
);

const Railing = ({ x, w }) => (
  <g>
    <rect x={x} y="493" width={w} height="44" fill="url(#tile)" />
    <path d={`M${x} 491h${w}M${x} 493h${w}`} />
  </g>
);

const Door = ({ x, handle }) => (
  <g transform={`translate(${x} 0)`}>
    <path d="M0 557V434h54v123" fill="#fff" />
    <path d="M3 537V437h47v100z" fill="url(#planks)" />
    <path d="M7 537h40v20H7z" fill="#fff" />
    <path d="M4 491h3v66H4zM47 491h3v66h-3z" fill="#eeeec8" />
    <path d="M7 537h40M7 544h40M7 551h40" />
    <path d={handle} stroke="#111" strokeWidth="2" fill="none" />
  </g>
);

const Curl = ({ x, y, r }) => (
  <>
    <circle cx={x} cy={y} r={r} fill="#c9cb80" />
    <circle cx={x} cy={y} r={r - 3} fill="#fff" />
  </>
);

const Window = ({ x }) => (
  <g transform={`translate(${x} 0)`}>
    <g shapeRendering="auto" stroke="#a2a455" strokeWidth=".8">
      <path d="M-9 440q-1-7 8-7v-5q2-6 8-4 3 5 10 5 8 0 9-9 8-7 16 0 2 9 10 9 7 0 9-5 7-2 9 4v5q9 0 8 7l-5 3v-6H-4v6z" fill="url(#lace)" />
      <Curl x={4} y={424} r={5} /><Curl x={35} y={422} r={6} /><Curl x={66} y={424} r={5} />
      <circle cx="35" cy="416" r="2.500" fill="#c9cb80" />
      <Curl x={-5} y={438} r={4} /><Curl x={75} y={438} r={4} />
    </g>
    <path d="M0 434h70v57H0z" fill="#fff" />
    <path d="M3 437h30v20H3zM36 437h31v20H36z" fill="url(#glassTop)" stroke="#6c6c78" />
    <path d="M3 461h30v30H3zM36 461h31v30H36z" fill="url(#glass)" />
    <g shapeRendering="auto">
      <path d="M42 441l22 14M18 478l14 12M52 480l10 10" stroke="#fff" strokeDasharray="2 1" />
    </g>
  </g>
);

const Level = ({ x, y, label, flip, shelf = true }) => {
  const s = flip ? -1 : 1;
  return (
    <g stroke="#666">
      {shelf && <path d={`M${x - 23 * s} ${y}h${82 * s}`} />}
      <path d={`M${x} ${y}v-9h${31 * s}M${x - 4 * s} ${y - 5}h${11 * s}M${x - 4 * s} ${y - 5}L${x} ${y}`} fill="none" />
      <text x={flip ? x - 17 : x + 5} y={y - 9} fontSize="6" fontWeight="700" fontStyle="italic" fill="#333" stroke="none" fontFamily="Liberation Sans, sans-serif">
        {label}
      </text>
    </g>
  );
};

const LEVELS = ["5.000", "3.000", "2.100", "0.900", "0.000", "-0.450"];
const Levels = ({ x, ys, flip }) =>
  LEVELS.map((l, i) => <Level key={l} x={x} y={ys[i]} label={l} flip={flip} shelf={i < 5} />);

const seamXs = Array.from({ length: 47 }, (_, i) => Math.round(494.500 + i * 14.670));
const doubleSeams = [2, 5, 8, 11, 14, 18, 21, 27, 30, 33, 36, 39, 42, 45];
const gableBottom = (x) => {
  const d = Math.abs(x - 841);
  return d > 179 ? 394 : Math.max(300, Math.round(300 + d * 0.525));
};
const siding = [415, 430, 445, 460, 475];

const Facade = () => (
  <Drawing viewBox="0 146 1592 685" preserveAspectRatio="xMinYMin meet" fill="none" role="img" aria-label="House facade drawing">
    <defs>
      <pattern id="lace" x="1" y="1" width="7" height="7" patternUnits="userSpaceOnUse">
        <g shapeRendering="auto">
          <rect width="7" height="7" fill="#c9cb88" />
          <circle cx="3.500" cy="3.500" r="2.200" fill="#fff" stroke="#8f9142" strokeWidth=".9" />
          <path d="M0 0h1v1H0zM6 0h1v1H6zM0 6h1v1H0zM6 6h1v1H6z" fill="#96984a" />
        </g>
      </pattern>
      <pattern id="tile" x="501" y="493" width="23.500" height="44" patternUnits="userSpaceOnUse">
        <g shapeRendering="auto" stroke="#83845a" strokeWidth=".9" fill="#fff">
          <rect width="24" height="44" fill="#f4f4ea" stroke="none" />
          <path d="M12 10l1.500 5L18 12l-2 5 5 1.500-5 1.500 2 5-4.500-3L12 27l-1.500-5L6 25l2-5-5-1.500L8 17l-2-5 4.500 3zM0 12l3 6.500L0 25M23.500 12l-3 6.500 3 6.500M12 33l2 4 4 1-4 2-2 4-2-4-4-2 4-1zM0 33l3 4.500L0 42M23.500 33l-3 4.500 3 4.500" />
          <path d="M3 4l3-2 3 2 1 3-1 3-3 2-3-2-1-3zM15 4l3-2 3 2 1 3-1 3-3 2-3-2-1-3zM3 27l3-2 3 2 1 3-1 3-3 2-3-2-1-3zM15 27l3-2 3 2 1 3-1 3-3 2-3-2-1-3zM4 44v-3l2-2 2 2v3M16 44v-3l2-2 2 2v3" />
          <path d="M12 11v15M4 18.500h16M7 14l10 9M17 14L7 23M12 0v4M10 7h4M10 30h4M0 7h2M22 7h1.500M0 30h2M22 30h1.500M12 2L9 0M12 2l3-2" fill="none" />
        </g>
      </pattern>
      <pattern id="planks" width="5" height="12" patternUnits="userSpaceOnUse">
        <rect width="5" height="12" fill="#fff" />
        <path d="M1.500 0v8M1.500 9v1" stroke="#8a8b5a" />
        <path d="M4 3v9M4 0v1" stroke="#c3c4a6" />
      </pattern>
      <linearGradient id="glassTop" x2="0" y2="1">
        <stop offset="0" stopColor="#d2d570" />
        <stop offset="1" stopColor="#e9ebb8" />
      </linearGradient>
      <linearGradient id="glass" x2="0" y2="1">
        <stop offset="0" stopColor="#e9ebb8" />
        <stop offset="1" stopColor="#fff" />
      </linearGradient>
    </defs>

    {/* main facade, with its slight fall to the right */}
    <g transform="matrix(1 -0.0023 0 1 -0.400 1.600)" stroke={INK} strokeWidth="1" shapeRendering="crispEdges">
      <path d="M491 399V300H1191V399" />
      <Seams xs={seamXs} doubles={doubleSeams} bottom={gableBottom} />
      <g shapeRendering="auto" strokeWidth="1.400">
        <path d="M662 394L841 300L1019 394M672 394L841 304L1009 394M682 394L841 311L999 394M694 394L841 317L987 394" />
      </g>
      {[325, 340, 355, 370, 385].map((y) => {
        const half = Math.round((y - 317) / 0.525);
        return <path key={y} d={`M${841 - half} ${y}H${841 + half}`} />;
      })}
      <path d="M824 384V352q-4-10 1-12l4-1q2-6 6-5 6-5 12 0 4-1 6 5l4 1q5 2 1 12v32z" fill="url(#lace)" stroke="#85863a" strokeDasharray="3 1" shapeRendering="auto" />
      <path d="M830 374V348q3-7 11-7t10 7v26z" fill="#fff" />
      <path d="M832 372V349q3-6 9-6t8 6v23z" fill="url(#glassTop)" strokeWidth=".6" />
      <path d="M841 341v33M830 357h21" strokeWidth="1.500" />
      {siding.map((y) => (
        <path key={y} d={`M507 ${y}H1174`} />
      ))}
      <path d="M491 394h700M491 399h700M492 399v5h698v-5M495 404v4h691v-4M661 394h358v5h-358z" fill="none" />
      <Window x={541} />
      <Window x={1070} />
      <Bracket x={507} /><Bracket x={667} flip />
      <Bracket x={677} /><Bracket x={836} flip />
      <Bracket x={846} /><Bracket x={1005} flip />
      <Bracket x={1015} /><Bracket x={1174} flip />
      <Railing x={507} w={153} /><Railing x={677} w={27} /><Railing x={748} w={88} />
      <Railing x={846} w={87} /><Railing x={978} w={27} /><Railing x={1021} w={153} />
      <path d="M494 558V537H1187V558M496 540H1185" />
      <path d="M496 539H1185" strokeWidth="2" />
      <Door x={699} handle="M11 490v-2h9" />
      <Door x={928} handle="M20 488h-9v3h3" />
      {[497, 667, 836, 1005, 1174].map((x) => <Column key={x} x={x} />)}
      <Spout x={481} /><Spout x={1200} flip />
      <path d="M653 399h9v4h-9zM654 403h7v4h-7zM655 407h5l5 18v126h-5V425z" fill={PIPE} />
      <path d="M1020 399h10l-6 26h-8z" fill={PIPE} stroke={PIPE} />
      <path d="M1015 426h6v126h-6z" fill={PIPE} />
      <path d="M529 537h5M808 537h66M1103 537h42" stroke="#111" />
    </g>
    <path d="M382 558.500H850L1323 557" stroke="#000" strokeWidth="3" />

    {/* neighbouring facade, cut by the view edge */}
    <g stroke={INK} shapeRendering="crispEdges" transform="translate(-1 0)">
      <path d="M0 300H56V400M0 396H56M0 400H55V405H0M0 409H52V405" />
      <path d="M5 301V395M34 301V395M49 301V395" stroke="#a5a67c" strokeWidth="2" />
      <path d="M18 301V395M20 301V395" stroke="#a3a46a" />
      <path d="M0 417H40M0 432H40M17 447H40M17 462H40M17 477H40" />
      <path d="M40 409H0Q14 412 24 424Q30 440 40 443Z" fill="url(#lace)" shapeRendering="auto" strokeDasharray="3 1" />
      <path d="M0 435H17V492M0 438H13V537" />
      <rect x="0" y="438" width="13" height="99" fill="url(#planks)" />
      <rect x="12" y="495" width="28" height="43" fill="url(#tile)" />
      <path d="M10 492H40M10 495H40M9 492h3v67H9z" fill="#fff" />
      <path d="M10 538H52V558M0 541H52M0 545H9M0 551H9" />
      <g transform="translate(0 1)"><Column x={40} /></g>
      <g transform="translate(0 1)"><Spout x={65} flip /></g>
    </g>
    <path d="M0 559H189" stroke="#000" strokeWidth="3" />

    <g shapeRendering="crispEdges">
      <Levels x={95} ys={[300, 395, 438, 492, 537, 558]} />
      <Levels x={451} ys={[300, 394, 437, 491, 536, 558]} flip />
      <Levels x={1230} ys={[298, 393, 435, 490, 535, 556]} />
    </g>

    <g stroke="#777">
      <path d="M498 593.500H840M840 592.500H1184M0 594.500H48" />
      {[502, 671, 840, 1010, 1179].map((x) => (
        <g key={x}>
          <path d={`M${x + 0.5} 560V602`} strokeDasharray="9 2 2 2" />
          <path d={`M${x - 3} 596l7-6`} strokeWidth="2" />
        </g>
      ))}
      <path d="M44.500 560V603" strokeDasharray="9 2 2 2" />
      <path d="M41 597l7-6" strokeWidth="2" />
      <circle cx="502" cy="613" r="9.500" />
      <circle cx="1179" cy="611.500" r="9.500" />
      <circle cx="44" cy="613.500" r="9.500" />
    </g>
    <g fill="#4f4f4f" fontSize="16" fontStyle="italic" textAnchor="middle">
      <text x="587" y="593">3.6</text>
      <text x="756" y="592">3.6</text>
      <text x="925" y="592">3.6</text>
      <text x="1094" y="592">3.6</text>
      <text x="502" y="619">1</text>
      <text x="1179" y="618">3</text>
      <text x="44" y="620">3</text>
    </g>

    {/* cursor */}
    <path d="M1238 651.500h89" stroke="#e79a9a" />
    <path d="M1267.500 592v89" stroke="#8fe69a" />
    <rect x="1264.500" y="648.500" width="6" height="6" fill="#fff" stroke="#111" strokeWidth="1.500" />

    {/* coordinate axes */}
    <path d="M19.500 763V813.500H70M15.500 808.500h9v9h-9zM13 812.500h6M20 810.500h10" stroke="#111" />
    <g fill="#000" fontSize="18" fontWeight="300" textAnchor="middle">
      <text x="27.500" y="759">Y</text>
      <text x="80.500" y="812">X</text>
      <text x="24.500" y="811">Z</text>
    </g>
  </Drawing>
);

const ViewCube = () => (
  <Compass width="140" height="132" viewBox="-10 0 140 132" role="img" aria-label="View cube">
    <circle cx="57" cy="67" r="51" fill="none" stroke="#fcfcfc" strokeWidth="14" />
    <path d="M25 41h49l3 2v48H25z" fill="#f0f0f1" />
    <path d="M26 41.500h50M26 90.500h48" stroke="#ccc" strokeDasharray="9 3 14 4" />
    <path d="M75.500 42v48" stroke="#999" strokeWidth="2" strokeDasharray="12 2 6 3" />
    <path d="M35 51h31v30H35z" fill="#e0e1e8" />
    <text x="50.500" y="71" fontSize="13" fontWeight="700" textAnchor="middle" fill="#88898f" fontFamily="Liberation Sans Narrow, Roboto, sans-serif">TOP</text>
    <g fill="#e4e4e4" stroke="#969696" strokeWidth=".8" fontSize="20" fontWeight="700" textAnchor="middle">
      <text x="56" y="20">N</text>
      <text x="3" y="74">W</text>
      <text x="112" y="74">E</text>
      <text x="56" y="128">S</text>
    </g>
  </Compass>
);

const NavArt = () => (
  <svg width="35" height="216" viewBox="0 0 35 216" fill="none" stroke="#cfcfcf" role="img" aria-label="Navigation bar">
    <rect x="1" y="1" width="33" height="214" rx="5" fill="#f6f6f6" stroke="#bdbdbd" strokeWidth="2" />
    <circle cx="27" cy="7" r="3" /><path d="M25 5l4 4M29 5l-4 4M25 208h4" /><circle cx="27" cy="208" r="3" />
    <path d="M18 21h10v11a10.500 10.500 0 11-10-11z" fill="#fff" /><circle cx="18" cy="32" r="6" /><path d="M14 36l-4 4M22 36l4 4" />
    <path d="M5 58.500h25M5 166.500h25" />
    <path d="M15 52h6l-3 2zM15 122h6l-3 2zM15 160h6l-3 2z" fill="#bbb" />
    <path d="M11 84q-2-7-5-9 2-3 6 2l-1-10q2-2 3 1l1 6V64q2-2 3 0l1 9 1-9q2-2 3 1l-1 9 2-6q3-1 3 2l-3 14-3 2h-8z" fill="#fff" />
    <path d="M7 92l14 14M21 92L7 106M7 97v-5h5M16 92h5v5M7 101v5h5" /><circle cx="22" cy="106" r="5" fill="#fff" /><path d="M26 110l4 4" strokeWidth="3" />
    <path d="M15 150v-16h-3l5-5 5 5h-3v16z" fill="#fff" /><path d="M15 140q-9 0-9 2 1 3 12 4 10 0 10-3 0-3-9-3M13 143l-4 3 4 2" />
    <path d="M6.500 171.500h5v6h-5zM14.500 171.500h5v6h-5zM22.500 171.500h5v6h-5zM6.500 180.500h15v13h-15z" fill="#fff" />
    <path d="M11 183l7 4-7 4z" fill="#ccc" />
  </svg>
);

const Quick = ({ icon, narrow }) => (
  <QuickButton $narrow={narrow} aria-label={icon}><Icon name={icon} /></QuickButton>
);

const Tool = ({ icon }) => <button type="button" aria-label={icon}><Icon name={icon} /></button>;

export default function App() {
  return (
    <Shell>
      <Global />
      <Header>
        <AppButton aria-label="Application menu"><Icon name="logo" /></AppButton>
        <TitleBar>
          <QuickAccess>
            {["newf", "open", "save", "saveas", "print", "undo"].map((n) => <Quick key={n} icon={n} />)}
            <Quick icon="smallCaret" narrow />
            <Quick icon="redo" />
            <Quick icon="smallCaret" narrow />
            <Quick icon="hatch" />
            <Quick icon="smallCaret" narrow />
            <Quick icon="qatEnd" narrow />
          </QuickAccess>
          <Caption><span>Autodesk AutoCAD 2016</span><span>Fasad.dwg</span></Caption>
          <InfoCenter>
            <Quick icon="right" narrow />
            <Search placeholder="Type a keyword or phrase" aria-label="Search" />
            <Quick icon="binoc" />
            <SignIn><Icon name="user" /><span>Sign In</span><Icon name="smallCaret" /></SignIn>
            <Quick icon="exch" /><Quick icon="a360" /><Quick icon="smallCaret" narrow />
            <Divider />
            <Quick icon="help" /><Quick icon="smallCaret" narrow />
          </InfoCenter>
          <WindowButtons>
            <Tool icon="min" /><Tool icon="max" /><Tool icon="close" />
          </WindowButtons>
        </TitleBar>

        <TabStrip>
          <Tab $active>Home</Tab>
          {TABS.map((t) => <Tab key={t}>{t}</Tab>)}
          <TabToggle aria-label="Minimize ribbon"><Icon name="ribbonMin" /><Icon name="smallCaret" /></TabToggle>
        </TabStrip>

        <Ribbon>
          <Panel title="Draw" w={224}>
            <Big icon="line" label="Line" w={40} />
            <Big icon="polyline" label="Polyline" w={46} />
            <Big icon="circle" label="Circle" w={54} menu />
            <Big icon="arc" label="Arc" w={38} menu />
            <Stack $w={6} />
            <Stack $w={36}>
              <Small icon="rect" menu /><Small icon="ellipse" menu /><Small icon="hatch" menu />
            </Stack>
          </Panel>
          <Panel title="Modify" w={250}>
            <Stack $w={6} />
            <Stack $w={72}><Small icon="move" label="Move" /><Small icon="copy" label="Copy" /><Small icon="stretch" label="Stretch" /></Stack>
            <Stack $w={68}><Small icon="rotate" label="Rotate" /><Small icon="mirror" label="Mirror" /><Small icon="scale" label="Scale" /></Stack>
            <Stack $w={76}><Small icon="trim" label="Trim" menu /><Small icon="fillet" label="Fillet" menu /><Small icon="array" label="Array" menu /></Stack>
            <Stack $w={24}><Small icon="erase" /><Small icon="explode" /><Small icon="offset" /></Stack>
          </Panel>
          <Panel title="Annotation" w={189}>
            <Big icon="text" label="Text" w={46} menu />
            <Big icon="dim" label="Dimension" w={62} />
            <Stack $w={2} />
            <Stack $w={72}><Small icon="linear" label="Linear" menu /><Small icon="leader" label="Leader" menu /><Small icon="table" label="Table" /></Stack>
          </Panel>
          <Panel title="Layers" w={273}>
            <Big icon="layerProps" label={"Layer\nProperties"} w={62} />
            <Stack $w={208}>
              <Pick
                w={208}
                label="Layer"
                value="тонкие"
                before={<><Icon name="bulb" /><Icon name="sun" /><Icon name="unlock" /><Swatch $c="#000" $plain /></>}
              />
              <Row>{["lOff", "lIso", "lFrz", "lLock"].map((n) => <Small key={n} icon={n} />)}<Small icon="lCur" label="Make Current" /></Row>
              <Row>{["lOn", "lUniso", "lThaw", "lUnlock"].map((n) => <Small key={n} icon={n} />)}<Small icon="lMatch" label="Match Layer" /></Row>
            </Stack>
          </Panel>
          <Panel title="Block" w={107}>
            <Big icon="insert" label="Insert" w={42} menu />
            <Stack $w={62}><Small icon="create" label="Create" /><Small icon="editB" label="Edit" /><Small icon="attrs" menu /></Stack>
          </Panel>
          <Panel title="Properties" w={222} launch>
            <Big icon="matchP" label={"Match\nProperties"} w={62} />
            <Stack $w={2} />
            <Stack $w={18}><Small icon="wheel" /><Small icon="weights" /><Small icon="types" /></Stack>
            <Stack $w={136}>
              <Pick w={136} label="Color" value="99,100,102" before={<Swatch $c="#646567" />} />
              <Pick w={136} label="Lineweight" value="ByLayer" large before={<LineSample />} />
              <Pick w={136} label="Linetype" value="ByLayer" large before={<LineSample />} />
            </Stack>
          </Panel>
          <Panel title="Groups" w={69}>
            <Big icon="group" label="Group" w={42} />
            <Stack $w={24}><Small icon="grpEdit" /><Small icon="grpAdd" /><Small icon="grpSel" on /></Stack>
          </Panel>
          <Panel title="Utilities" w={97}>
            <Big icon="measure" label="Measure" w={72} menu />
            <Stack $w={2} />
            <Stack $w={18}><Small icon="quick" /><Small icon="point" /><Small icon="calc" /></Stack>
          </Panel>
          <Panel title="Clipboard" w={80} plain>
            <Big icon="paste" label="Paste" w={56} menu />
            <Stack $w={20}><Small icon="cut" /><Small icon="copyClip" /></Stack>
          </Panel>
          <Panel title="View" w={62} launch>
            <Big icon="base" label="Base" w={60} menu />
          </Panel>
        </Ribbon>
        <RibbonEdge />
      </Header>

      <Canvas>
        <Facade />
        <ViewControls>
          <button>[−]</button><button>[Custom View]</button><button>[2D Wireframe]</button>
        </ViewControls>
        <DocButtons><Tool icon="sMin" /><Tool icon="sMax" /><Tool icon="sClose" /></DocButtons>
        <ViewCube />
        <WcsButton>WCS<Icon name="hollow" /></WcsButton>
        <NavBar><NavArt /></NavBar>
        <CommandLine>
          <CommandGrip><Icon name="grip" /><Icon name="cx" /><Icon name="wrench" /></CommandGrip>
          <CommandButton type="button" aria-label="Recent commands"><Icon name="prompt" /><Icon name="dark" /></CommandButton>
          <CommandInput placeholder="Type a command" aria-label="Command" />
          <CommandButton type="button" aria-label="History"><Icon name="up" /></CommandButton>
        </CommandLine>
      </Canvas>

      <Footer>
        <SheetTabs>
          <Sheet $w={57} $active>Model</Sheet>
          <Sheet $w={64}>Layout1</Sheet>
          <Sheet $w={24} $bold>+</Sheet>
        </SheetTabs>
        <StatusTools>
          <StatusGroup $w={50}><button>MODEL</button></StatusGroup>
          <StatusGroup $w={64}><Tool icon="grid" /><Tool icon="dots" /><Tool icon="caret" /></StatusGroup>
          <StatusGroup $w={104}><Tool icon="ortho" /><Tool icon="polar" /><Tool icon="caret" /><Tool icon="iso" /><Tool icon="caret" /></StatusGroup>
          <StatusGroup $w={64}><Tool icon="track" /><Tool icon="osnap" /><Tool icon="caret" /></StatusGroup>
          <StatusGroup $w={114}><Tool icon="ann1" /><Tool icon="ann2" /><Tool icon="ann3" /><button>1:10<Icon name="caret" /></button></StatusGroup>
          <StatusGroup $w={40}><Tool icon="gear" /><Tool icon="caret" /></StatusGroup>
          <StatusGroup $w={25}><Tool icon="plus" /></StatusGroup>
          <StatusGroup $w={25}><Tool icon="shapes" /></StatusGroup>
          <StatusGroup $w={25}><Tool icon="perf" /></StatusGroup>
          <StatusGroup $w={25}><Tool icon="cloud" /></StatusGroup>
          <StatusGroup $w={50}><Tool icon="full" /><Tool icon="menu" /></StatusGroup>
        </StatusTools>
      </Footer>
    </Shell>
  );
}
